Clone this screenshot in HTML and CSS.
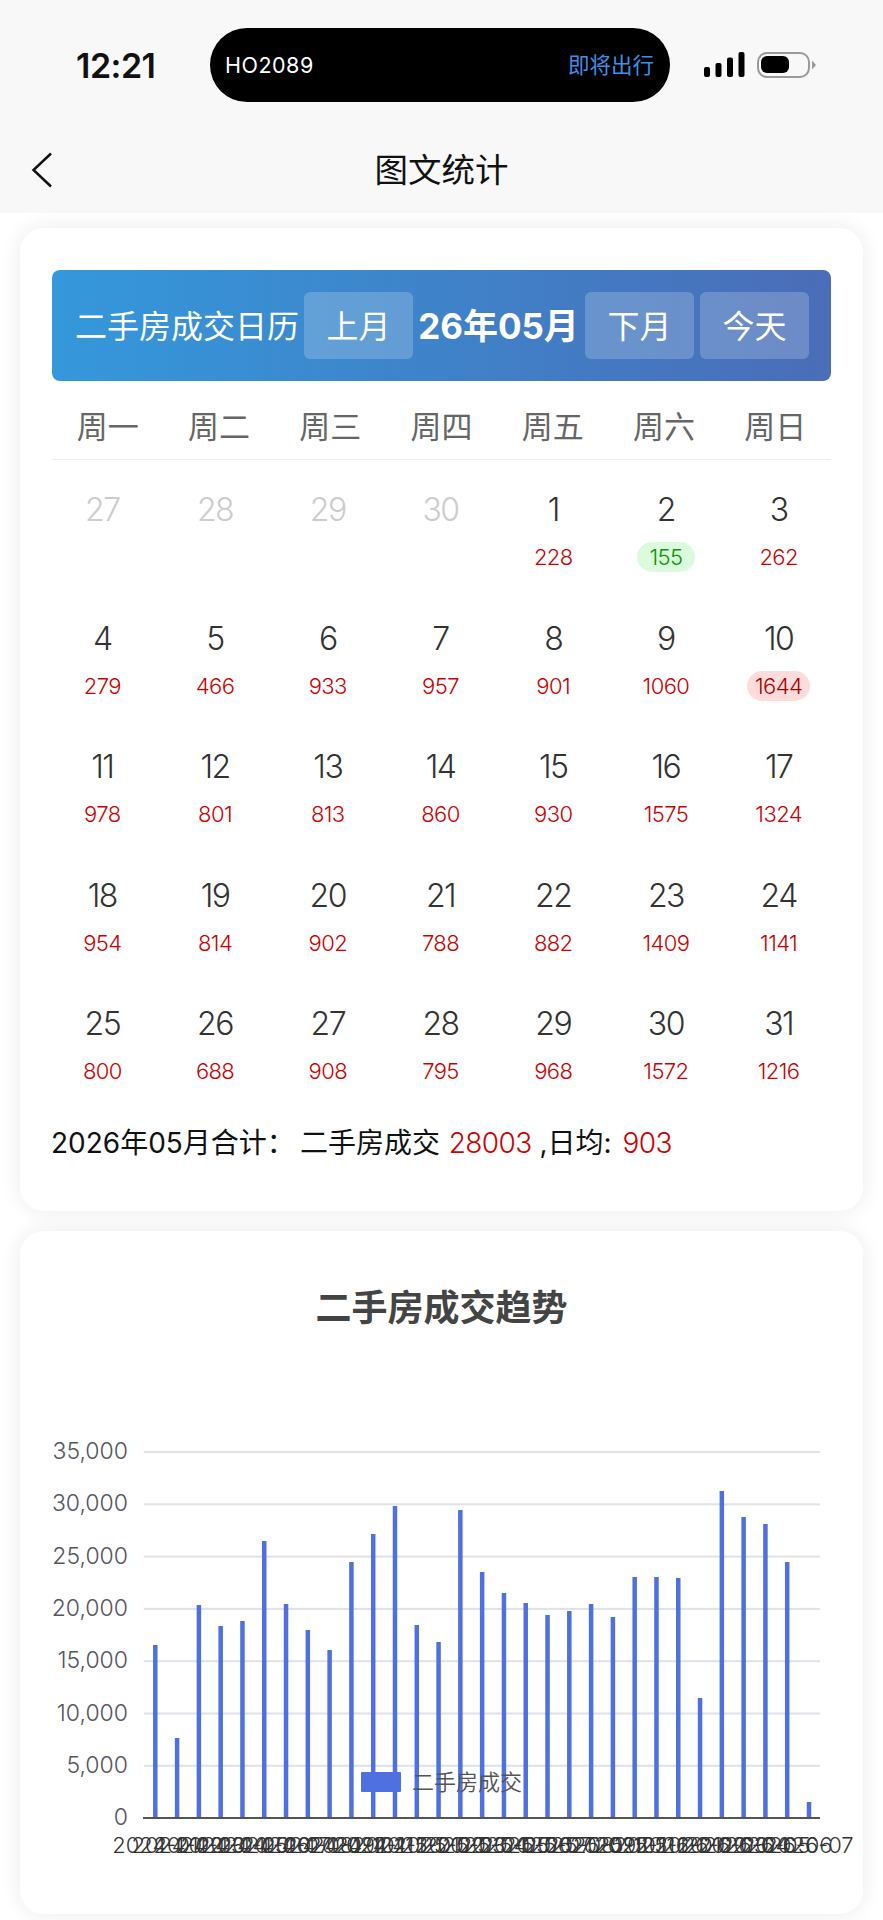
FILE: index.html
```html
<!DOCTYPE html>
<html lang="zh-CN">
<head>
    <meta charset="UTF-8">
    <meta name="viewport" content="width=device-width, initial-scale=1.0">
    <title>图文统计</title>
    <link rel="stylesheet" href="styles.css">
</head>
<body>
    <header class="top">
        <div class="status">
            <span class="time">12:21</span>
            <div class="island">
                <span class="flight">HO2089</span>
                <span class="flight-state">即将出行</span>
            </div>
            <svg class="status-icons" width="114" height="27" viewBox="0 0 114 27">
                <rect x="0" y="15" width="6" height="10" rx="2"/>
                <rect x="11.500" y="11" width="6" height="14" rx="2"/>
                <rect x="23" y="5.500" width="6" height="19.500" rx="2"/>
                <rect x="34.500" y="0" width="6" height="25" rx="2"/>
                <rect x="54" y="1" width="51" height="24" rx="9" fill="none" stroke="#999" stroke-width="2"/>
                <rect x="57" y="4" width="28" height="17" rx="6"/>
                <path d="M108 8.500l4 4.500-4 4.500z" fill="#999"/>
            </svg>
        </div>
        <nav class="nav">
            <svg class="back" width="22" height="36" viewBox="0 0 22 36">
                <path d="M20 1.500L2.500 18 20 34.500" fill="none" stroke="#111" stroke-width="2.500"/>
            </svg>
            <h1>图文统计</h1>
        </nav>
    </header>

    <main class="page">
        <section class="card cal-card">
            <div class="cal-head">
                <span class="cal-title">二手房成交日历</span>
                <button class="cal-btn">上月</button>
                <span class="cal-month">26年05月</span>
                <button class="cal-btn">下月</button>
                <button class="cal-btn btn-today">今天</button>
            </div>
            <div class="weeks">
                <span>周一</span><span>周二</span><span>周三</span><span>周四</span><span>周五</span><span>周六</span><span>周日</span>
            </div>
            <div class="days">
                <div class="day muted"><b>27</b></div>
                <div class="day muted"><b>28</b></div>
                <div class="day muted"><b>29</b></div>
                <div class="day muted"><b>30</b></div>
                <div class="day"><b>1</b><i>228</i></div>
                <div class="day"><b>2</b><i class="low">155</i></div>
                <div class="day"><b>3</b><i>262</i></div>
                <div class="day"><b>4</b><i>279</i></div>
                <div class="day"><b>5</b><i>466</i></div>
                <div class="day"><b>6</b><i>933</i></div>
                <div class="day"><b>7</b><i>957</i></div>
                <div class="day"><b>8</b><i>901</i></div>
                <div class="day"><b>9</b><i>1060</i></div>
                <div class="day"><b>10</b><i class="high">1644</i></div>
                <div class="day"><b>11</b><i>978</i></div>
                <div class="day"><b>12</b><i>801</i></div>
                <div class="day"><b>13</b><i>813</i></div>
                <div class="day"><b>14</b><i>860</i></div>
                <div class="day"><b>15</b><i>930</i></div>
                <div class="day"><b>16</b><i>1575</i></div>
                <div class="day"><b>17</b><i>1324</i></div>
                <div class="day"><b>18</b><i>954</i></div>
                <div class="day"><b>19</b><i>814</i></div>
                <div class="day"><b>20</b><i>902</i></div>
                <div class="day"><b>21</b><i>788</i></div>
                <div class="day"><b>22</b><i>882</i></div>
                <div class="day"><b>23</b><i>1409</i></div>
                <div class="day"><b>24</b><i>1141</i></div>
                <div class="day"><b>25</b><i>800</i></div>
                <div class="day"><b>26</b><i>688</i></div>
                <div class="day"><b>27</b><i>908</i></div>
                <div class="day"><b>28</b><i>795</i></div>
                <div class="day"><b>29</b><i>968</i></div>
                <div class="day"><b>30</b><i>1572</i></div>
                <div class="day"><b>31</b><i>1216</i></div>
            </div>
            <p class="total">
                <span class="total-label">2026年05月合计：</span>二手房成交 <em>28003</em> ,日均: <em class="avg">903</em>
            </p>
        </section>

        <section class="card chart-card">
            <h2>二手房成交趋势</h2>
            <div class="chart-wrap">
                <svg id="chart" class="chart" width="843" height="470" viewBox="20 1420 843 470"></svg>
            </div>
        </section>
    </main>

    <script src="chart.js"></script>
</body>
</html>
```

FILE: styles.css
```css
* {
    box-sizing: border-box;
}
body {
    margin: 0;
    background-color: #fff;
    font-family: Inter, "Noto Sans CJK SC", sans-serif;
    color: #333;
}

/* top bar */
.top {
    height: 213px;
    padding-top: 28px;
    background-color: #f8f8f8;
}
.status {
    display: flex;
    align-items: center;
    height: 74px;
    padding-left: 76px;
}
.time {
    width: 79px;
    font-size: 34px;
    font-weight: 600;
    letter-spacing: -0.5px;
    white-space: nowrap;
    color: #111;
}
.island {
    display: flex;
    align-items: center;
    justify-content: space-between;
    width: 460px;
    height: 74px;
    margin-left: 55px;
    padding: 0 16px 0 15px;
    background-color: #000;
    border-radius: 37px;
}
.flight {
    font-size: 21.500px;
    letter-spacing: 0.5px;
    color: #fff;
}
.flight-state {
    padding-bottom: 3px;
    font-size: 21.500px;
    color: #3f8fe8;
}
.status-icons {
    margin-left: 34px;
}
.nav {
    display: grid;
    grid-template-columns: 1fr auto 1fr;
    align-items: center;
    margin-top: 50px;
}
.back {
    margin-left: 31px;
}
.nav h1 {
    margin: 0;
    font-size: 33.500px;
    font-weight: 400;
    line-height: 36px;
    color: #111;
}

/* cards */
.page {
    padding: 15px 20px 6px;
}
.card {
    background-color: #fff;
    border-radius: 24px;
    box-shadow: 0 0 20px rgba(60, 30, 40, 0.09);
}
.cal-card {
    height: 983px;
    padding: 42px 32px 0;
}
.chart-card {
    height: 683px;
    margin-top: 20px;
    padding-top: 51px;
}

/* calendar */
.cal-head {
    display: flex;
    align-items: center;
    height: 111px;
    padding: 0 22px 0 23px;
    background: linear-gradient(90deg, #3498db, #4a6db7);
    border-radius: 8px;
    color: #fff;
}
.cal-title {
    width: 229px;
    padding-bottom: 4px;
    font-size: 32px;
    white-space: nowrap;
}
.cal-btn {
    width: 109px;
    height: 67px;
    padding: 0 0 4px;
    background-color: rgba(255, 255, 255, 0.2);
    border: none;
    border-radius: 6px;
    font-family: inherit;
    font-size: 32px;
    color: #fff;
    cursor: pointer;
}
.btn-today {
    margin-left: 6px;
}
.cal-month {
    flex: 1;
    padding: 0 1px 4px 0;
    font-size: 35px;
    font-weight: 700;
    text-align: center;
    white-space: nowrap;
}
.weeks {
    display: grid;
    grid-template-columns: repeat(7, 1fr);
    align-items: center;
    height: 79px;
    padding-top: 8px;
    border-bottom: 1px solid #eee;
    font-size: 31px;
    text-align: center;
    color: #666;
}
.days {
    display: grid;
    grid-template-columns: repeat(7, 1fr);
    grid-auto-rows: 128.600px;
    margin: 0 -4px 0 -6px;
}
.day {
    display: flex;
    flex-direction: column;
    align-items: center;
    padding-top: 30px;
}
.day b {
    height: 40px;
    font-size: 32px;
    font-weight: 350;
    line-height: 40px;
    letter-spacing: -1.500px;
}
.day i {
    min-width: 58px;
    height: 30px;
    margin-top: 12px;
    padding: 0 8px;
    border-radius: 15px;
    font-size: 22px;
    font-style: normal;
    font-weight: 350;
    line-height: 30px;
    letter-spacing: -0.600px;
    text-align: center;
    color: #cc0000;
}
.day i.low {
    background-color: #dcfbdc;
    color: #090;
}
.day i.high {
    background-color: #ffdcdc;
    color: #a00;
}
.muted b {
    color: #ccc;
}
.total {
    margin: 19px 0 0 -1px;
    font-size: 28px;
    line-height: 42px;
    color: #111;
    white-space: nowrap;
}
.total-label {
    margin-right: 5px;
}
.total em {
    margin-left: 1px;
    font-style: normal;
    font-weight: 350;
    letter-spacing: -0.600px;
    color: #cc0000;
}
.total .avg {
    margin-left: 3px;
}

/* chart */
.chart-card h2 {
    margin: 0;
    font-size: 36px;
    font-weight: 700;
    line-height: 52px;
    text-align: center;
    color: #444;
}
.chart-wrap {
    margin-top: 86px;
}
.chart {
    display: block;
}
.chart text {
    font-family: Inter, "Noto Sans CJK SC", sans-serif;
    font-size: 23px;
    font-weight: 350;
    fill: #55565e;
}
.chart .x-label {
    font-size: 22px;
    font-weight: 300;
    fill: #333;
}
.chart .legend-text {
    fill: #555;
    font-size: 22px;
}
```

FILE: chart.js
```js
// draws the trend chart as plain svg
const tops = [1645, 1738, 1605, 1626, 1621, 1541, 1604, 1630, 1650, 1562, 1534, 1506, 1625, 1642,
    1510, 1572, 1593, 1603, 1615, 1611, 1604, 1617, 1577, 1577, 1578, 1698, 1491, 1517, 1524, 1562, 1802];
const grid = ["35,000", "30,000", "25,000", "20,000", "15,000", "10,000", "5,000"];
const chart = document.getElementById("chart");
let html = "";

grid.forEach(function (label, i) {
    const y = 1452 + i * 52.3;
    html += `<rect x="144" y="${y - 1}" width="676" height="2" fill="#dfe2e8"/>`;
    html += `<text x="128" y="${y + 7}" text-anchor="end">${label}</text>`;
});
html += `<text x="128" y="1825" text-anchor="end">0</text>`;

tops.forEach(function (top, i) {
    const x = 155.3 + i * 21.79;
    html += `<rect x="${x - 2.25}" y="${top}" width="4.5" height="${1817 - top}" fill="#4f70e0"/>`;
    const month = 2024 * 12 + i;
    const name = Math.floor(month / 12) + "-" + String(month % 12 + 1).padStart(2, "0");
    html += `<text class="x-label" x="${x}" y="1853" text-anchor="middle">${name}</text>`;
});

html += `<rect x="143" y="1817" width="677" height="2" fill="#555"/>`;
html += `<rect x="361" y="1772" width="40" height="20" rx="1" fill="#4f70e0"/>`;
html += `<text class="legend-text" x="412" y="1790">二手房成交</text>`;
chart.innerHTML = html;
```
